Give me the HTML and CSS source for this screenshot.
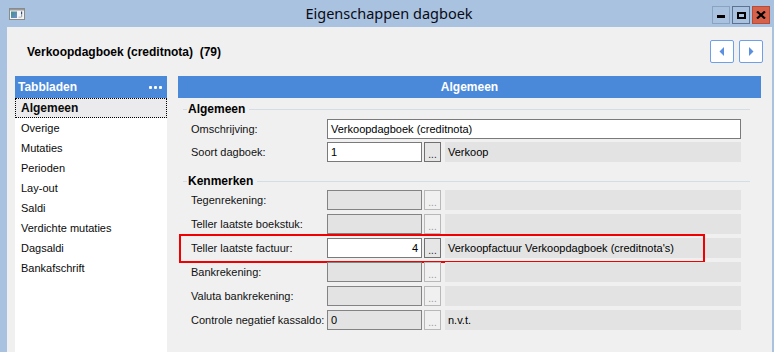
FILE: index.html
```html
<!DOCTYPE html>
<html lang="nl">
<head>
<meta charset="utf-8">
<title>Eigenschappen dagboek</title>
<link rel="stylesheet" href="styles.css">
</head>
<body>
<div class="window">
  <div class="titlebar">
    <div class="tb-left">
      <svg class="app-icon" width="16" height="12" viewBox="0 0 16 12">
        <rect x="0.5" y="0.5" width="15" height="11" fill="#f4f4f4" stroke="#8a8a8a"/>
        <rect x="1" y="1" width="14" height="1.5" fill="#9a9a9a"/>
        <defs><linearGradient id="g1" x1="0" y1="0" x2="1" y2="1"><stop offset="0" stop-color="#3f8f8a"/><stop offset="1" stop-color="#6f8fd0"/></linearGradient></defs>
        <rect x="2" y="3.5" width="6" height="6.5" fill="url(#g1)"/>
        <rect x="12" y="3.5" width="1.2" height="3" fill="#304a80"/>
        <rect x="12" y="7.5" width="1.2" height="1" fill="#304a80"/>
        <rect x="9.5" y="8.5" width="3" height="1.5" fill="#c8c8c8"/>
      </svg>
    </div>
    <div class="tb-title">Eigenschappen dagboek</div>
    <div class="tb-controls">
      <div class="wbtn min"><span class="glyph-min"></span></div>
      <div class="wbtn max"><span class="glyph-max"></span></div>
      <div class="wbtn close">
        <svg width="10" height="8" viewBox="0 0 10 8"><path d="M1 0.5 L9 7.5 M9 0.5 L1 7.5" stroke="#000" stroke-width="2.2"/></svg>
      </div>
    </div>
  </div>
  <div class="client">
    <div class="head">
      <div class="head-title">Verkoopdagboek (creditnota)  (79)</div>
      <div class="nav">
        <div class="navbtn"><svg width="6" height="9" viewBox="0 0 6 9"><path d="M5 0 L5 9 L0.5 4.5 Z" fill="#5a8fe2"/></svg></div>
        <div class="navbtn"><svg width="6" height="9" viewBox="0 0 6 9"><path d="M1 0 L1 9 L5.5 4.5 Z" fill="#5a8fe2"/></svg></div>
      </div>
    </div>
    <div class="main">
      <aside class="tabs">
        <div class="tabs-head"><span>Tabbladen</span><span class="dots"><i></i><i></i><i></i></span></div>
        <div class="tab active">Algemeen</div>
        <div class="tab">Overige</div>
        <div class="tab">Mutaties</div>
        <div class="tab">Perioden</div>
        <div class="tab">Lay-out</div>
        <div class="tab">Saldi</div>
        <div class="tab">Verdichte mutaties</div>
        <div class="tab">Dagsaldi</div>
        <div class="tab">Bankafschrift</div>
      </aside>
      <section class="panel">
        <div class="panel-head">Algemeen</div>
        <div class="panel-body">
          <div class="group-title g1"><span class="gl-short"></span><span class="gt">Algemeen</span><span class="gl-long"></span></div>
          <div class="row">
            <div class="label">Omschrijving:</div>
            <div class="input wide">Verkoopdagboek (creditnota)</div>
          </div>
          <div class="row r2">
            <div class="label">Soort dagboek:</div>
            <div class="input">1</div>
            <div class="btn">...</div>
            <div class="desc">Verkoop</div>
          </div>
          <div class="group-title g2"><span class="gl-short"></span><span class="gt">Kenmerken</span><span class="gl-long"></span></div>
          <div class="rows">
            <div class="row">
              <div class="label">Tegenrekening:</div>
              <div class="input disabled"></div>
              <div class="btn disabled">...</div>
              <div class="desc"></div>
            </div>
            <div class="row">
              <div class="label">Teller laatste boekstuk:</div>
              <div class="input disabled"></div>
              <div class="btn disabled">...</div>
              <div class="desc"></div>
            </div>
            <div class="row marked">
              <div class="label">Teller laatste factuur:</div>
              <div class="input num">4</div>
              <div class="btn">...</div>
              <div class="desc">Verkoopfactuur Verkoopdagboek (creditnota's)</div>
            </div>
            <div class="row">
              <div class="label">Bankrekening:</div>
              <div class="input disabled"></div>
              <div class="btn disabled">...</div>
              <div class="desc"></div>
            </div>
            <div class="row">
              <div class="label">Valuta bankrekening:</div>
              <div class="input disabled"></div>
              <div class="btn disabled">...</div>
              <div class="desc"></div>
            </div>
            <div class="row">
              <div class="label">Controle negatief kassaldo:</div>
              <div class="input disabled">0</div>
              <div class="btn disabled">...</div>
              <div class="desc">n.v.t.</div>
            </div>
          </div>
        </div>
      </section>
    </div>
  </div>
</div>
</body>
</html>
```

FILE: styles.css
```css
* { box-sizing: border-box; }
html, body { margin: 0; padding: 0; }
body {
  width: 774px;
  height: 352px;
  overflow: hidden;
  background: #a8c2e0;
  font-family: "Liberation Sans", Arial, sans-serif;
  font-size: 11px;
  color: #000;
}
.window {
  width: 774px;
  height: 352px;
  display: flex;
  flex-direction: column;
  background: #a8c2e0;
}
.titlebar {
  height: 27px;
  display: grid;
  grid-template-columns: 1fr auto 1fr;
  align-items: start;
}
.tb-left { padding: 8px 0 0 9px; }
.app-icon { display: block; }
.tb-title {
  font-family: "Noto Sans", "Open Sans", sans-serif;
  font-size: 14.5px;
  line-height: 27px;
  color: #0a0a14;
  padding-left: 4px;
}
.tb-controls {
  display: flex;
  justify-content: flex-end;
  gap: 2px;
  padding: 6px 4px 0 0;
}
.wbtn {
  width: 18px;
  height: 18px;
  border: 1px solid #8aa3c1;
  display: flex;
  align-items: center;
  justify-content: center;
  background: #a8c2e0;
}
.wbtn.max { border-color: #5d7190; }
.wbtn.close { background: #d6624b; border-color: #b54c38; }
.glyph-min { width: 8px; height: 3px; background: #000; margin-top: 3px; }
.glyph-max { width: 9px; height: 7px; border: 2px solid #000; }

.client {
  flex: 1;
  margin: 0 2px 0 7px;
  background: #f0f0f0;
  display: flex;
  flex-direction: column;
}
.head {
  margin-top: 13px;
  height: 23px;
  display: flex;
  align-items: center;
  justify-content: space-between;
  padding: 0 9px 0 20px;
}
.head-title {
  font-weight: bold;
  font-size: 12px;
  white-space: pre;
}
.nav { display: flex; gap: 5px; }
.navbtn {
  width: 24px;
  height: 23px;
  background: #fff;
  border: 1px solid #6e9fea;
  border-radius: 2px;
  display: flex;
  align-items: center;
  justify-content: center;
}
.main {
  flex: 1;
  margin-top: 13px;
  display: flex;
  gap: 11px;
  padding: 0 11px 0 8px;
}
.tabs {
  width: 152px;
  background: #fff;
}
.tabs-head {
  height: 22px;
  background: #4a88da;
  color: #fff;
  font-weight: bold;
  font-size: 12px;
  display: flex;
  align-items: center;
  justify-content: space-between;
  padding: 0 4px 0 3px;
}
.dots { display: flex; gap: 2px; padding-right: 1px; }
.dots i { display: block; width: 3px; height: 3px; background: #fff; border-radius: 1px; }
.tab {
  height: 20px;
  line-height: 20px;
  padding-left: 6px;
  color: #0a0a0a;
}
.tab.active {
  font-weight: bold;
  font-size: 12px;
  background: #ebebee;
  border: 1px dotted #000;
  line-height: 18px;
  padding-left: 5px;
}
.panel {
  flex: 1;
  display: flex;
  flex-direction: column;
}
.panel-head {
  height: 22px;
  background: #4a88da;
  color: #fff;
  font-weight: bold;
  font-size: 12px;
  display: flex;
  align-items: center;
  justify-content: center;
}
.panel-body {
  padding: 0 11px 0 5px;
}
.group-title {
  height: 14px;
  display: flex;
  align-items: center;
}
.group-title.g1 { margin-top: 4px; margin-bottom: 3px; }
.group-title.g2 { margin-top: 12px; margin-bottom: 2px; }
.gl-short { width: 4px; height: 1px; background: #d3dde6; }
.gl-long { flex: 1; height: 1px; background: #d3dde6; }
.gt { font-weight: bold; font-size: 12px; padding: 0 4px 0 1px; }
.row {
  position: relative;
  height: 20px;
  display: flex;
  align-items: stretch;
  padding-left: 8px;
}
.row.r2 { margin-top: 3px; }
.rows { display: flex; flex-direction: column; gap: 4px; }
.label {
  width: 136px;
  display: flex;
  align-items: center;
  color: #111;
}
.input {
  width: 95px;
  background: #fff;
  border: 1px solid #7a7a7a;
  display: flex;
  align-items: center;
  padding: 0 3px;
  white-space: nowrap;
}
.input.wide { width: 414px; }
.input.disabled { background: #e3e3e3; border-color: #838383; }
.input.num { justify-content: flex-end; }
.btn {
  width: 17px;
  margin-left: 2px;
  border: 1px solid #707070;
  background: #e6e6e6;
  font-size: 10px;
  display: flex;
  align-items: flex-end;
  justify-content: center;
  line-height: 12px;
  color: #222;
}
.btn.disabled { border-color: #b8b8b8; background: #f0f0f0; color: #9a9a9a; }
.desc {
  width: 296px;
  margin-left: 4px;
  background: #e3e3e3;
  display: flex;
  align-items: center;
  padding: 0 3px;
  white-space: nowrap;
}
.row.marked::after {
  content: "";
  position: absolute;
  left: -4px;
  top: -4px;
  width: 522px;
  height: 25px;
  border: 2px solid #f00000;
  pointer-events: none;
}
```
